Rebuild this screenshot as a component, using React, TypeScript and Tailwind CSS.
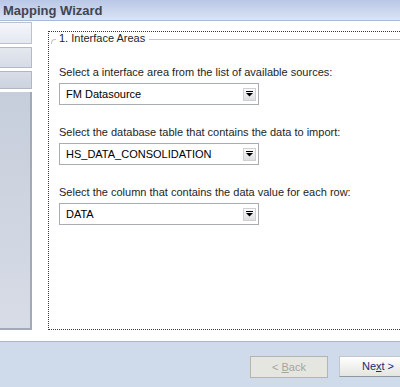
import React from 'react';

function DropArrow() {
  return (
    <div className="w-[13px] h-[13px] mr-[2px] flex items-center justify-center border border-[#cfd0d2] bg-gradient-to-b from-[#fafafa] to-[#dedfe1]">
      <svg width="9" height="6" viewBox="0 0 9 6">
        <rect x="1" y="0" width="7" height="1" fill="#000" />
        <polygon points="1,2 8,2 4.5,5.5" fill="#000" />
      </svg>
    </div>
  );
}

function Combo({ value }: { value: string }) {
  return (
    <div className="w-[200px] h-[22px] border border-[#a9adb3] bg-white flex items-center justify-between pl-[6px]">
      <span className="text-black">{value}</span>
      <DropArrow />
    </div>
  );
}

const fields = [
  { label: 'Select a interface area from the list of available sources:', value: 'FM Datasource' },
  { label: 'Select the database table that contains the data to import:', value: 'HS_DATA_CONSOLIDATION' },
  { label: 'Select the column that contains the data value for each row:', value: 'DATA' },
];

export default function App() {
  return (
    <div className="w-[400px] h-[387px] flex flex-col overflow-hidden bg-white text-[11px] leading-[13px] text-[#1e1e1e] font-['Liberation_Sans',Arial,sans-serif]">
      {/* Title bar */}
      <div className="h-[21px] shrink-0 flex items-center pl-[3px] bg-gradient-to-b from-[#b9c7e7] to-[#dbe3f4] border-b border-[#a9b9dc]">
        <span className="text-[13px] font-bold text-[#3e4652]">Mapping Wizard</span>
      </div>

      {/* Body */}
      <div className="flex-1 flex border-b border-[#a9b4c6] min-h-0">
        {/* Steps sidebar */}
        <div className="w-[32px] shrink-0 flex flex-col gap-[3px] pt-[1px] pb-[11px]">
          <div className="h-[22px] bg-gradient-to-b from-[#f4f6fa] to-[#e4e8f0] border border-l-0 border-[#bcc2cd]" />
          <div className="h-[21px] bg-gradient-to-b from-[#e4e8ef] to-[#d6dce7] border border-l-0 border-[#b3b9c5]" />
          <div className="h-[18px] bg-gradient-to-b from-[#d8dde7] to-[#ccd3df] border border-l-0 border-[#b0b7c3]" />
          <div className="flex-1 bg-gradient-to-b from-[#c6cedb] to-[#d7dce6] border-r-2 border-b-2 border-[#a3aab6]" />
        </div>

        {/* Step content */}
        <div className="flex-1 ml-[16px] mt-[10px] mb-[11px] -mr-[20px] border border-dotted border-[#3a3a3a] flex flex-col">
          <div className="h-[13px] flex items-center">
            <div className="w-[5px] h-[5px] ml-[2px] mt-[6px] border-l border-t border-[#c4c4c4] rounded-tl-[4px]" />
            <span className="ml-[3px] pr-[4px] text-[#1e1e1e]">1. Interface Areas</span>
            <div className="flex-1 h-px bg-[#c8c8c8] mt-[1px]" />
          </div>
          <div className="pl-[10px] flex flex-col">
            {fields.map((f) => (
              <div key={f.value} className="flex flex-col mt-[21px]">
                <div className="mb-[4px]">{f.label}</div>
                <Combo value={f.value} />
              </div>
            ))}
          </div>
        </div>
      </div>

      {/* Footer */}
      <div className="h-[45px] shrink-0 bg-[#cfdbea] flex items-start pt-[14px] pl-[250px] gap-[11px]">
        <button className="w-[78px] h-[22px] shrink-0 bg-[#e5e6e0] border border-[#b5b5ad] text-[#a5a49e]">
          &lt; <span className="underline">B</span>ack
        </button>
        <button className="w-[78px] h-[21px] shrink-0 bg-gradient-to-b from-[#ffffff] to-[#e4e4e0] border border-[#c2c6cc] border-b-[#8f98a3] text-[#1f2a6e]">
          Ne<span className="underline">x</span>t &gt;
        </button>
      </div>
    </div>
  );
}
